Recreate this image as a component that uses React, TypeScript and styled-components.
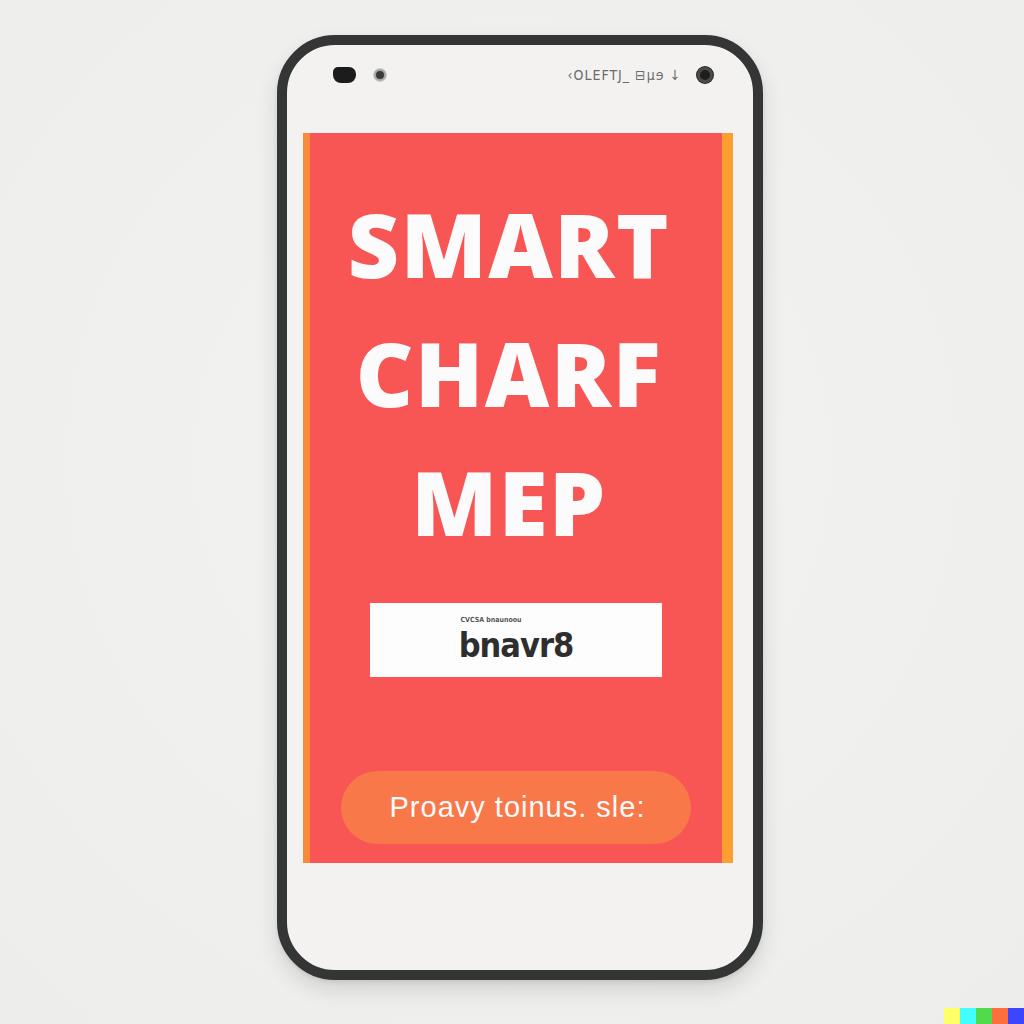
import React from 'react';
import styled, { createGlobalStyle } from 'styled-components';

const GlobalStyle = createGlobalStyle`
    html, body {
        margin: 0;
        padding: 0;
        background: #efefee;
    }
    body {
        width: 1024px;
        height: 1024px;
        overflow: hidden;
        font-family: 'Open Sans', 'Liberation Sans', sans-serif;
    }
`;

const Page = styled.div`
    position: relative;
    width: 1024px;
    height: 1024px;
    box-sizing: border-box;
    padding: 35px 0 0 277px;
    display: flex;
    align-items: flex-start;
    background: radial-gradient(circle at 50% 45%, #f3f3f2 0%, #ededec 100%);
`;

const Phone = styled.div`
    width: 486px;
    height: 945px;
    box-sizing: border-box;
    border: 10px solid #343535;
    border-radius: 58px;
    background: #f3f2f1;
    box-shadow: 0 10px 22px rgba(0, 0, 0, 0.12), 0 2px 4px rgba(0, 0, 0, 0.08);
    display: flex;
    flex-direction: column;
    overflow: hidden;
`;

const StatusRow = styled.div`
    height: 18px;
    margin: 21px 40px 0 46px;
    display: flex;
    align-items: center;
`;

const Speaker = styled.div`
    width: 23px;
    height: 16px;
    border-radius: 5px 7px 8px 8px;
    background: #1c1c1c;
`;

const Lens = styled.div<{ $size: number; $dark?: boolean }>`
    width: ${({ $size }) => $size}px;
    height: ${({ $size }) => $size}px;
    border-radius: 50%;
    box-sizing: border-box;
    border: ${({ $dark }) => ($dark ? '3px solid #4a4a4a' : '2px solid #a5a5a5')};
    background: ${({ $dark }) => ($dark ? '#1e1e1e' : '#3a3a3a')};
    box-shadow: 0 0 0 1px ${({ $dark }) => ($dark ? '#2a2a2a' : '#cfcfcf')};
`;

const Spacer = styled.div<{ $w?: number }>`
    ${({ $w }) => ($w ? `width: ${$w}px;` : 'flex: 1;')}
`;

const StatusText = styled.span`
    font-family: 'DejaVu Sans Condensed', 'DejaVu Sans', sans-serif;
    font-size: 14px;
    color: #6b6b6b;
    letter-spacing: 1px;
`;

const Screen = styled.div`
    margin: 49px 20px 0 16px;
    height: 730px;
    box-sizing: border-box;
    background: #f85555;
    border-left: 7px solid #f98a3a;
    border-right: 11px solid #fd9e30;
    display: flex;
    flex-direction: column;
    align-items: center;
`;

const Headline = styled.h1`
    margin: 46px 14px 0 0;
    font-family: 'Open Sans', 'Liberation Sans', sans-serif;
    font-weight: 800;
    font-size: 89px;
    line-height: 129px;
    letter-spacing: 1.5px;
    color: #fbfbfb;
    text-align: center;
`;

const CodeBox = styled.div`
    margin-top: 37px;
    width: 292px;
    height: 74px;
    background: #fdfdfd;
    display: flex;
    flex-direction: column;
    align-items: center;
    justify-content: center;
`;

const CodeCaption = styled.span`
    margin: 0 50px 0 0;
    font-family: 'DejaVu Sans Condensed', sans-serif;
    font-size: 7px;
    font-weight: bold;
    line-height: 9px;
    color: #555;
`;

const CodeText = styled.span`
    font-family: 'DejaVu Sans Condensed', 'DejaVu Sans', sans-serif;
    font-weight: bold;
    font-size: 34px;
    line-height: 40px;
    letter-spacing: -1px;
    color: #2e2e2e;
`;

const ActionButton = styled.button`
    margin-top: 94px;
    width: 350px;
    height: 73px;
    border: none;
    border-radius: 37px;
    background: #f9784a;
    color: #fbfbfb;
    font-family: 'Liberation Sans', Arial, sans-serif;
    font-size: 29px;
    letter-spacing: 1px;
    padding: 0 0 0 3px;
    cursor: pointer;
`;

const Swatches = styled.div`
    position: absolute;
    right: 0;
    bottom: 0;
    display: flex;
`;

const Swatch = styled.div<{ $color: string }>`
    width: 16px;
    height: 16px;
    background: ${({ $color }) => $color};
`;

const SWATCH_COLORS = ['#ffff66', '#42ffff', '#51da4c', '#ff6e3c', '#3c46ff'];

const App: React.FC = () => {
    return (
        <>
            <GlobalStyle />
            <Page>
                <Phone>
                    <StatusRow>
                        <Speaker />
                        <Spacer $w={18} />
                        <Lens $size={12} />
                        <Spacer />
                        <StatusText>‹OLEFTJ_ ⊟μɘ ↓</StatusText>
                        <Spacer $w={16} />
                        <Lens $size={16} $dark />
                    </StatusRow>
                    <Screen>
                        <Headline>
                            SMART
                            <br />
                            CHARF
                            <br />
                            MEP
                        </Headline>
                        <CodeBox>
                            <CodeCaption>CVCSA bnaunoou</CodeCaption>
                            <CodeText>bnavr8</CodeText>
                        </CodeBox>
                        <ActionButton>Proavy toinus. sle:</ActionButton>
                    </Screen>
                </Phone>
                <Swatches>
                    {SWATCH_COLORS.map((c) => (
                        <Swatch key={c} $color={c} />
                    ))}
                </Swatches>
            </Page>
        </>
    );
};

export default App;
